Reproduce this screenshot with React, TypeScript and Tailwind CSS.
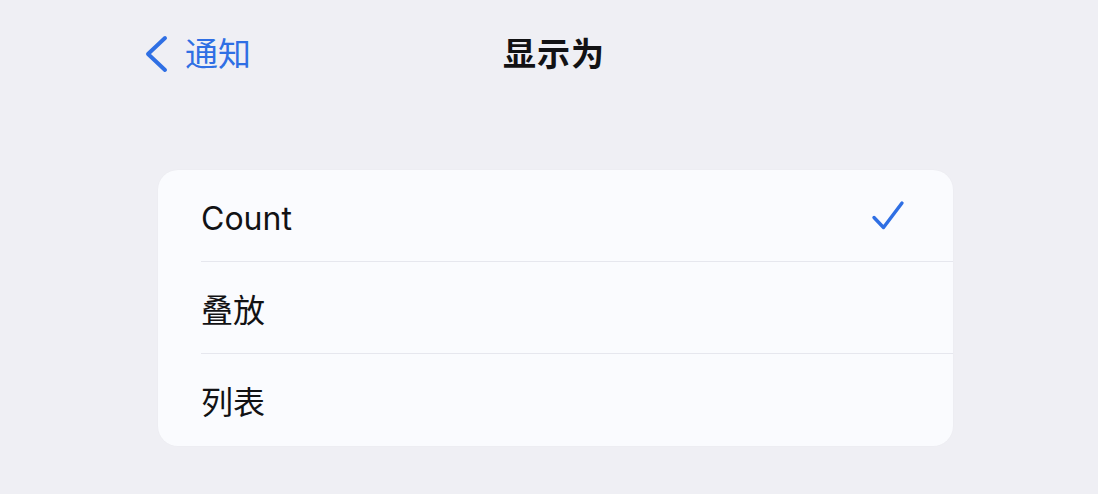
import React from "react";

const options = ["Count", "叠放", "列表"];

function Chevron() {
  return (
    <svg width="26" height="38" viewBox="0 0 26 38" fill="none" className="shrink-0">
      <path d="M22 3 L5 19 L22 35" stroke="#2f6fe4" strokeWidth="4" strokeLinecap="round" strokeLinejoin="round" />
    </svg>
  );
}

function Check() {
  return (
    <svg width="34" height="32" viewBox="0 0 34 32" fill="none">
      <path d="M3 17.5 L12.5 27.5 L31 3" stroke="#2f6fe4" strokeWidth="3.4" strokeLinecap="round" strokeLinejoin="round" />
    </svg>
  );
}

export default function App() {
  const selected = 0;
  return (
    <div
      className="w-[1098px] h-[494px] bg-[#efeff4] overflow-hidden text-[#121214]"
      style={{ fontFamily: 'Inter, "Noto Sans CJK SC", sans-serif' }}
    >
      <header className="flex items-center h-[108px] pl-[143px]">
        <a href="#" className="flex items-center gap-[16px] text-[#2f6fe4] text-[33px] leading-none">
          <Chevron />
          <span>通知</span>
        </a>
        <h1 className="ml-[252px] text-[33px] font-semibold leading-none tracking-[1px]">显示为</h1>
      </header>

      <div className="mt-[62px] ml-[158px] w-[795px] rounded-[20px] bg-[#fafbfe] shadow-[0_0_2px_rgba(0,0,0,0.03)]">
        {options.map((opt, i) => (
          <div key={opt} className="pl-[43px]">
            <div
              className={
                "flex items-center justify-between h-[92px] pr-[48px] " +
                (i < options.length - 1 ? "border-b border-[#e6e7ee]" : "")
              }
            >
              <span className="pt-[6px] text-[32px] leading-none">{opt}</span>
              {i === selected && <Check />}
            </div>
          </div>
        ))}
      </div>
    </div>
  );
}
